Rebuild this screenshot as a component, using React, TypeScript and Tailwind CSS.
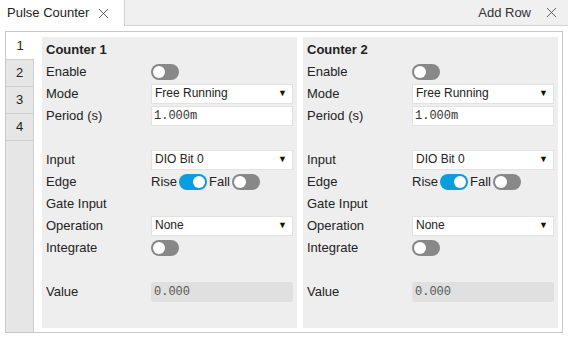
import { X } from 'lucide-react';

type RowKind =
  | { kind: 'toggle'; on: boolean }
  | { kind: 'select'; value: string }
  | { kind: 'input'; value: string }
  | { kind: 'edge' }
  | { kind: 'readonly'; value: string }
  | { kind: 'none' };

const rows: { label: string; control: RowKind }[] = [
  { label: 'Enable', control: { kind: 'toggle', on: false } },
  { label: 'Mode', control: { kind: 'select', value: 'Free Running' } },
  { label: 'Period (s)', control: { kind: 'input', value: '1.000m' } },
  { label: '', control: { kind: 'none' } },
  { label: 'Input', control: { kind: 'select', value: 'DIO Bit 0' } },
  { label: 'Edge', control: { kind: 'edge' } },
  { label: 'Gate Input', control: { kind: 'none' } },
  { label: 'Operation', control: { kind: 'select', value: 'None' } },
  { label: 'Integrate', control: { kind: 'toggle', on: false } },
  { label: '', control: { kind: 'none' } },
  { label: 'Value', control: { kind: 'readonly', value: '0.000' } },
];

function Toggle({ on }: { on: boolean }) {
  return (
    <span
      className={`inline-flex w-[28px] h-[16px] rounded-full items-center px-[2px] ${
        on ? 'bg-[#0c9de0] justify-end' : 'bg-[#888888] justify-start'
      }`}
    >
      <span className="w-[12px] h-[12px] rounded-full bg-white" />
    </span>
  );
}

function Control({ c }: { c: RowKind }) {
  switch (c.kind) {
    case 'toggle':
      return <Toggle on={c.on} />;
    case 'select':
      return (
        <div className="w-full h-[20px] bg-white border border-[#e2e2e2] flex items-center justify-between pl-[3px] pr-[5px] text-[12px] text-[#222]">
          <span className="-mt-[2px]">{c.value}</span>
          <span className="text-[9px] text-[#111]">▼</span>
        </div>
      );
    case 'input':
      return (
        <div className="w-full h-[20px] bg-white border border-[#e2e2e2] flex items-center pl-[2px] text-[12px] text-[#333] font-['Liberation_Mono',monospace]">
          {c.value}
        </div>
      );
    case 'readonly':
      return (
        <div className="w-full h-[20px] bg-[#e0e0e0] rounded-[2px] flex items-center pl-[3px] text-[12px] text-[#555] font-['Liberation_Mono',monospace]">
          {c.value}
        </div>
      );
    case 'edge':
      return (
        <div className="flex items-center gap-[2px]">
          <span>Rise</span>
          <Toggle on={true} />
          <span>Fall</span>
          <Toggle on={false} />
        </div>
      );
    default:
      return null;
  }
}

function CounterPanel({ n }: { n: number }) {
  return (
    <div className="flex-1 bg-[#eeeeee] pt-[2px] pl-[4px] pr-[4px]">
      <div className="h-[22px] flex items-center font-bold">Counter {n}</div>
      {rows.map((r, i) => (
        <div key={i} className="h-[22px] flex items-center">
          <div className="w-[105px] shrink-0">{r.label}</div>
          <div className="flex-1 flex items-center">
            <Control c={r.control} />
          </div>
        </div>
      ))}
    </div>
  );
}

export default function App() {
  return (
    <div className="w-[568px] h-[338px] bg-white text-[13px] text-[#222] font-['Liberation_Sans',Arial,sans-serif] overflow-hidden">
      {/* Top tab bar */}
      <div className="h-[26px] flex bg-[#f0f0f0] border-b border-[#d4d4d4]">
        <div className="w-[125px] bg-white border-r border-[#d0d0d0] flex items-center pl-[7px] -mb-[1px]">
          <span>Pulse Counter</span>
          <X size={17} strokeWidth={1.2} className="ml-[6px] text-[#444]" />
        </div>
        <div className="flex-1" />
        <div className="flex items-center pr-[8px]">
          <span className="text-[#333]">Add Row</span>
          <X size={17} strokeWidth={1.2} className="ml-[12px] text-[#444]" />
        </div>
      </div>

      {/* Body */}
      <div className="pt-[5px] px-[5px]">
        <div className="h-[302px] border border-[#cacaca] flex">
          {/* Vertical tabs */}
          <div className="w-[28px] shrink-0 bg-[#e6e6e6] flex flex-col">
            <div className="h-[27px] bg-white flex items-center justify-center">1</div>
            {[2, 3, 4].map((t) => (
              <div
                key={t}
                className="h-[27px] border-t border-r border-[#cfcfcf] flex items-center justify-center"
              >
                {t}
              </div>
            ))}
            <div className="flex-1 border-t border-r border-[#cfcfcf]" />
          </div>

          {/* Panels */}
          <div className="flex-1 flex gap-[6px] pl-[8px] pr-[4px] pt-[5px] pb-[4px]">
            <CounterPanel n={1} />
            <CounterPanel n={2} />
          </div>
        </div>
      </div>
    </div>
  );
}
